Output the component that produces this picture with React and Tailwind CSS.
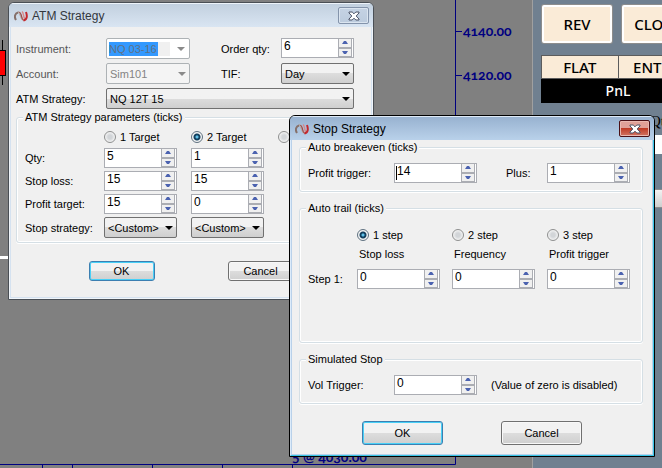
import React from "react";
import { clsx } from "clsx";

function Logo() {
  return (
    <svg width="14" height="12" viewBox="0 0 14 12" fill="none" aria-hidden="true">
      <path d="M2 10C0 7 1 3 4 2.500" stroke="#86706a" strokeWidth="2" />
      <path d="M4 2C7 2 6.500 8 9 10" stroke="#b3a5a1" strokeWidth="2" />
      <path d="M5.500 2C8 4 7 8 9.500 10.500" stroke="#9c3a3a" strokeWidth="1" />
      <path d="M8 1.500C10 3 9 7 11 9.500" stroke="#d8898a" strokeWidth="1.500" />
      <path d="M9.500 10.500C13 10 13.500 6 12 2" stroke="#c4282d" strokeWidth="2" />
    </svg>
  );
}

function CloseIcon() {
  return (
    <svg width="12" height="10" viewBox="0 0 12 10" aria-hidden="true">
      <path
        d="M1 1H4.2L6 2.8L7.8 1H11V2L8.2 5L11 8V9H7.8L6 7.2L4.2 9H1V8L3.8 5L1 2Z"
        fill="#fff"
        stroke="#4b5266"
        strokeWidth="1"
      />
    </svg>
  );
}

function Spinner({ label, id, value, className, caret }) {
  return (
    <div className={clsx("relative flex h-5 border border-[#abadb3] bg-white pr-px", className)}>
      {caret && <span className="absolute left-px top-0.5 h-3.5 w-px bg-black" />}
      <input
        id={id}
        aria-label={label}
        type="text"
        inputMode="numeric"
        defaultValue={value}
        className="w-full min-w-0 flex-1 bg-transparent pb-1 pl-0.5 text-xs leading-3 outline-none"
      />
      <div className="flex w-3.5 shrink-0 flex-col">
        <button
          type="button"
          aria-label="Increase"
          className="flex flex-1 items-center justify-center border border-t-0 border-[#abadb3] bg-[#f0f0f0]"
        >
          <svg width="6" height="3" viewBox="0 0 6 3">
            <path d="M0 3L2 0H4L6 3Z" fill="#4b62b0" />
          </svg>
        </button>
        <button
          type="button"
          aria-label="Decrease"
          className="flex flex-1 items-center justify-center border border-[#abadb3] bg-[#f0f0f0]"
        >
          <svg width="6" height="3" viewBox="0 0 6 3">
            <path d="M0 0L2 3H4L6 0Z" fill="#4b62b0" />
          </svg>
        </button>
      </div>
    </div>
  );
}

function Select({ label, id, value, className, disabled }) {
  return (
    <div className={clsx("relative flex h-[21px] items-center justify-end", className)}>
      <select
        id={id}
        aria-label={label}
        disabled={disabled}
        className={clsx(
          "size-full appearance-none rounded-xs border pl-[3px] text-[11px] leading-4 opacity-100 outline-none",
          disabled
            ? "border-[#adb2b5] bg-[#f4f4f4] text-[#838383]"
            : "border-[#707070] bg-linear-to-b from-[#f2f2f2] from-50% via-[#dddddd] via-50% to-[#cfcfcf]",
        )}
      >
        <option>{value}</option>
      </select>
      <Arrow disabled={disabled} />
    </div>
  );
}

function Arrow({ disabled }) {
  return (
    <svg
      width="8"
      height="4"
      viewBox="0 0 8 4"
      className="pointer-events-none absolute right-1"
      aria-hidden="true"
    >
      <path d="M0 0H8L4 4Z" fill={disabled ? "#8a8a8a" : "#000"} />
    </svg>
  );
}

function Radio({ name, children, label, checked }) {
  return (
    <label className="flex h-4 items-center gap-1 whitespace-nowrap">
      <input
        type="radio"
        name={name}
        aria-label={label}
        defaultChecked={checked}
        className="size-3 shrink-0 appearance-none rounded-full border border-[#8e8f8f] bg-[radial-gradient(circle,#d2d5d8_0_2px,#f4f4f4_5px)] checked:border-[#5f7180] checked:bg-[radial-gradient(circle,#5fc0e8_0_1px,#12405f_2px_3px,#f4f4f4_4px)]"
      />
      {children}
    </label>
  );
}

function PushButton({ children, primary, className }) {
  return (
    <button
      type="button"
      className={clsx(
        "rounded-[3px] border bg-linear-to-b from-[#f2f2f2] from-50% via-[#dddddd] via-50% to-[#cfcfcf] text-[11px] leading-4",
        primary
          ? "border-[#3c7fb1] shadow-[inset_0_0_0_1px_#48d0f7]"
          : "border-[#707070] shadow-[inset_0_0_0_1px_#f8f8f8]",
        className,
      )}
    >
      {children}
    </button>
  );
}

function Group({ title, className, children }) {
  return (
    <fieldset
      className={clsx(
        "min-w-0 rounded-[3px] border border-[#d5dfe5] pl-2 shadow-[inset_0_0_0_1px_#fff,0_1px_0_#fff]",
        className,
      )}
    >
      <legend className="-ml-0.5 h-3.5 bg-[#f0f0f0] px-0.5 leading-3.5">{title}</legend>
      {children}
    </fieldset>
  );
}

function Dialog({ title, active, className, children }) {
  return (
    <section
      aria-label={title}
      className={clsx(
        "absolute w-[366px] overflow-hidden rounded-t-md border text-[11px] leading-3.5 text-black",
        active ? "border-black bg-[#b4cde8]" : "border-[#4a4f55] bg-[#dce7f3]",
        className,
      )}
    >
      <header
        className={clsx(
          "flex h-6 items-center gap-1 border-t pl-[5px] pr-1",
          active
            ? "border-[#dfeaf6] bg-linear-to-b from-[#98b2d0] to-[#b9d1ea]"
            : "border-[#eef4fa] bg-linear-to-b from-[#c2d0df] to-[#d9e5f2]",
        )}
      >
        <Logo />
        <h2 className={clsx("flex-1 text-xs leading-4", !active && "text-[#33373d]")}>{title}</h2>
        <button
          type="button"
          aria-label="Close"
          className={clsx(
            "flex h-[17px] w-[31px] items-center justify-center rounded-xs border",
            active
              ? "border-[#4a1016] bg-linear-to-b from-[#e0a198] from-45% via-[#bf3b25] via-50% to-[#d07362] shadow-[inset_0_0_0_1px_#e9b8b0]"
              : "border-[#8494ab] bg-linear-to-b from-[#c5d3e4] to-[#bccbdd] shadow-[inset_0_0_0_1px_#dbe5f0]",
          )}
        >
          <CloseIcon />
        </button>
      </header>
      <div
        className={clsx(
          "border-b border-l border-r",
          active ? "border-b-[#39c5e6] border-l-[#dcebfa] border-r-[#39c5e6]" : "border-[#f0f5fa]",
        )}
      >
        <div className={clsx("border border-t-0 bg-[#f0f0f0]", active ? "border-[#b9d1ea]" : "border-[#d5e2f0]")}>
          {children}
        </div>
      </div>
    </section>
  );
}

function AtmDialog() {
  return (
    <Dialog title="ATM Strategy" className="left-2 top-0.5">
      <form className="pb-4 pt-[11px]">
        <div className="ml-[5px] grid grid-cols-[90px_84px_31px_60px_73px] items-start gap-y-1">
          <label htmlFor="instrument" className="pt-1 text-[#555]">Instrument:</label>
          <div className="relative flex h-[21px] items-center rounded-xs border border-[#adb2b5] bg-white pl-0.5">
            <div className="w-[61px] bg-[#f0f0f0]">
              <input
                id="instrument"
                disabled
                defaultValue="NQ 03-16"
                className="block h-3.5 w-[49px] bg-[#3399ff] text-[11px] leading-3.5 text-[#5f7286]"
              />
            </div>
            <Arrow disabled />
          </div>
          <span />
          <label htmlFor="order-qty" className="pt-1">Order qty:</label>
          <Spinner id="order-qty" value="6" />
          <label htmlFor="account" className="pt-1 text-[#555]">Account:</label>
          <Select id="account" value="Sim101" disabled />
          <span />
          <label htmlFor="tif" className="pt-1">TIF:</label>
          <Select id="tif" value="Day" />
          <label htmlFor="atm" className="pt-1">ATM Strategy:</label>
          <Select id="atm" value="NQ 12T 15" className="col-span-4" />
        </div>
        <Group title="ATM Strategy parameters (ticks)" className="ml-[5px] mr-1.5 mt-px pb-1 pt-[5px]">
          <div className="grid grid-cols-[65px_73px_73px_73px] items-center gap-x-3.5 gap-y-[3px] whitespace-nowrap">
            <span />
            <Radio name="targets">1 Target</Radio>
            <Radio name="targets" checked>2 Target</Radio>
            <Radio name="targets" label="3 Target" />
            <span>Qty:</span>
            <Spinner label="Qty, target 1" value="5" />
            <Spinner label="Qty, target 2" value="1" />
            <span />
            <span>Stop loss:</span>
            <Spinner label="Stop loss, target 1" value="15" />
            <Spinner label="Stop loss, target 2" value="15" />
            <span />
            <span>Profit target:</span>
            <Spinner label="Profit target, target 1" value="15" />
            <Spinner label="Profit target, target 2" value="0" />
            <span />
            <span>Stop strategy:</span>
            <Select label="Stop strategy, target 1" value="<Custom>" />
            <Select label="Stop strategy, target 2" value="<Custom>" />
          </div>
        </Group>
        <div className="mt-[18px] flex justify-center gap-[73px]">
          <PushButton primary className="h-5 w-[66px]">OK</PushButton>
          <PushButton className="h-5 w-[66px]">Cancel</PushButton>
        </div>
      </form>
    </Dialog>
  );
}

function StopDialog() {
  return (
    <Dialog title="Stop Strategy" active className="left-[289px] top-[115px]">
      <form className="pb-[9px]">
        <div className="ml-[7px] mr-[9px] flex flex-col gap-[9px]">
          <Group title="Auto breakeven (ticks)" className="pb-2 pt-[9px]">
            <div className="flex items-center">
              <label htmlFor="profit-trigger" className="w-[86px]">Profit trigger:</label>
              <Spinner id="profit-trigger" value="14" caret className="w-[83px]" />
              <label htmlFor="plus" className="ml-[29px] w-[41px]">Plus:</label>
              <Spinner id="plus" value="1" className="w-[83px]" />
            </div>
          </Group>
          <Group title="Auto trail (ticks)" className="pb-[53px] pt-3">
            <div className="grid grid-cols-[37px_83px_83px_83px] items-center gap-x-3 whitespace-nowrap">
              <span />
              <Radio name="steps" checked>1 step</Radio>
              <Radio name="steps">2 step</Radio>
              <Radio name="steps">3 step</Radio>
              <span />
              <span className="pb-2 pl-0.5 pt-1">Stop loss</span>
              <span className="pb-2 pl-0.5 pt-1">Frequency</span>
              <span className="pb-2 pl-0.5 pt-1">Profit trigger</span>
              <span>Step 1:</span>
              <Spinner label="Step 1 stop loss" value="0" />
              <Spinner label="Step 1 frequency" value="0" />
              <Spinner label="Step 1 profit trigger" value="0" />
            </div>
          </Group>
          <Group title="Simulated Stop" className="pb-2 pt-[9px]">
            <div className="flex items-center">
              <label htmlFor="vol-trigger" className="w-[86px]">Vol Trigger:</label>
              <Spinner id="vol-trigger" value="0" className="w-[83px]" />
              <span className="ml-3.5">(Value of zero is disabled)</span>
            </div>
          </Group>
        </div>
        <div className="mt-[17px] flex justify-center gap-[58px]">
          <PushButton primary className="h-6 w-[81px]">OK</PushButton>
          <PushButton className="h-6 w-[81px]">Cancel</PushButton>
        </div>
      </form>
    </Dialog>
  );
}

function Chart() {
  return (
    <svg className="h-full min-w-0 flex-1 bg-[#808080]" aria-label="Price chart">
      <path d="M2.5 40V85" stroke="#000" />
      <rect x="-6" y="50.5" width="11.5" height="25" fill="#f00" stroke="#000" />
      <rect x="0" y="256" width="9" height="3" fill="#fff" />
      <path
        d="M455.500 0V464.500H0M455 31.500H462M455 75.500H462M42.500 464V480M72.500 464V480M152.500 464V480M222.500 464V480M292.500 464V480"
        stroke="#000080"
        fill="none"
      />
      <g fill="#000080" className="font-['Lato'] text-[14px] font-bold [font-variant-numeric:oldstyle-nums]">
        <text x="463" y="36">4140.00</text>
        <text x="463" y="80">4120.00</text>
        <text x="292" y="462">5 @ 4030.00</text>
      </g>
    </svg>
  );
}

function OrderPanel() {
  const big = "h-[38px] w-[70px] shrink-0 rounded-xs border-2 border-white bg-[#faebd7] shadow-[0_0_0_1px_#8d8d8d]";
  return (
    <aside className="w-[130px] shrink-0 overflow-hidden border-l border-[#a0a0a0] bg-[#708090] pl-2 text-[15px] font-medium leading-5 text-black font-['Noto_Sans',sans-serif]">
      <div className="w-[154px]">
        <div className="flex gap-2.5 pl-px pt-[5px]">
          <button type="button" className={big}>REV</button>
          <button type="button" className={big}>CLOSE</button>
        </div>
        <div className="mt-3 grid grid-cols-2 gap-px border border-[#5c5c5c] bg-[#5c5c5c]">
          <button type="button" className="h-[22px] bg-[#faebd7]">FLAT</button>
          <button type="button" className="h-[22px] bg-[#faebd7]">ENTER</button>
        </div>
        <div className="h-6 bg-black text-center text-sm leading-6 text-white">PnL</div>
        <label htmlFor="panel-qty" className="ml-[109px] mt-2 block h-5 font-['Liberation_Serif',serif] text-[15px] font-normal">Qty</label>
        <input id="panel-qty" className="mt-1 block h-[19px] w-full bg-white" />
        <button type="button" aria-label="Order type" className="mt-[35px] block h-[19px] w-full border border-[#8d8d8d] bg-linear-to-b from-[#f2f2f2] to-[#cfcfcf]" />
      </div>
    </aside>
  );
}

export default function App() {
  return (
    <main className="relative flex h-screen overflow-hidden font-['Liberation_Sans',Arial,sans-serif]">
      <Chart />
      <OrderPanel />
      <AtmDialog />
      <StopDialog />
    </main>
  );
}
